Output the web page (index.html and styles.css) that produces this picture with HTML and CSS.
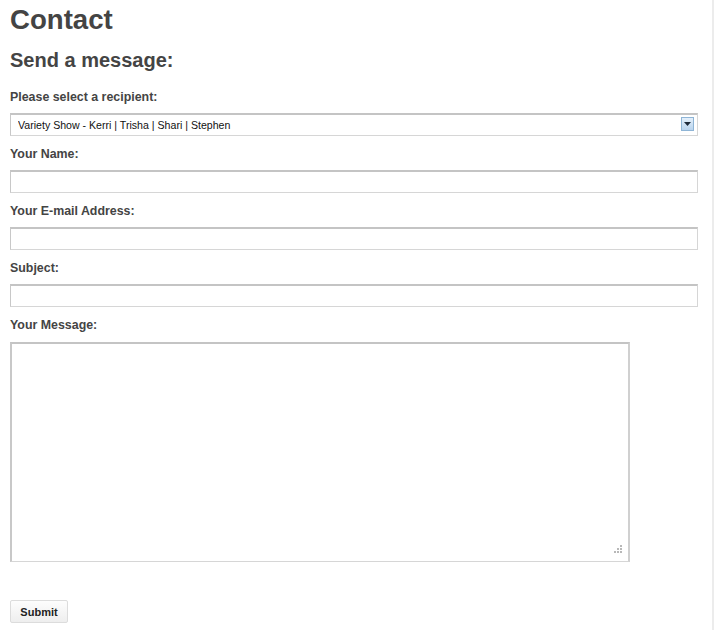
FILE: index.html
```html
<!DOCTYPE html>
<html>
<head>
<meta charset="utf-8">
<link rel="stylesheet" href="styles.css">
</head>
<body>
<div class="page">
  <h1 class="title">Contact</h1>
  <h2 class="subtitle">Send a message:</h2>
  <form class="form">
    <label class="label">Please select a recipient:</label>
    <div class="select-wrap">
      <select class="select">
        <option>Variety Show - Kerri | Trisha | Shari | Stephen</option>
      </select>
      <span class="select-btn"><svg width="7" height="4" viewBox="0 0 7 4"><path d="M0 0h7L3.5 4z" fill="#1d2a3a"/></svg></span>
    </div>
    <label class="label">Your Name:</label>
    <input class="input" type="text">
    <label class="label">Your E-mail Address:</label>
    <input class="input" type="text">
    <label class="label">Subject:</label>
    <input class="input" type="text">
    <label class="label">Your Message:</label>
    <div class="textarea-wrap">
      <textarea class="textarea"></textarea>
      <span class="grip"><svg width="9" height="9" viewBox="0 0 9 9"><g fill="#b8b8b8"><rect x="7" y="0" width="2" height="2"/><rect x="4" y="3" width="2" height="2"/><rect x="7" y="3" width="2" height="2"/><rect x="1" y="6" width="2" height="2"/><rect x="4" y="6" width="2" height="2"/><rect x="7" y="6" width="2" height="2"/></g></svg></span>
    </div>
    <div class="actions">
      <button class="submit" type="button">Submit</button>
    </div>
  </form>
</div>
</body>
</html>
```
FILE: styles.css
```css
html, body {
  margin: 0;
  padding: 0;
  background: #fff;
}
body {
  font-family: "Liberation Sans", Arial, sans-serif;
  color: #444;
}
.page {
  width: 702px;
  height: 630px;
  padding-left: 10px;
  border-right: 2px solid #ececec;
  box-sizing: content-box;
}
.title {
  margin: 0;
  padding-top: 4px;
  font-size: 27.6px;
  line-height: 32px;
  font-weight: bold;
  color: #444;
}
.subtitle {
  margin: 12px 0 0;
  font-size: 20px;
  line-height: 24px;
  font-weight: bold;
  color: #444;
}
.form {
  display: flex;
  flex-direction: column;
  align-items: flex-start;
  margin-top: 17px;
}
.label {
  display: block;
  font-size: 12.4px;
  line-height: 16px;
  font-weight: bold;
  color: #444;
  margin-bottom: 8px;
}
.select-wrap {
  position: relative;
  width: 688px;
  height: 23px;
  margin-bottom: 10px;
}
.select {
  -webkit-appearance: none;
  appearance: none;
  width: 688px;
  height: 23px;
  box-sizing: border-box;
  margin: 0;
  border: 1px solid #d6d6d6;
  border-top: 2px solid #c4c4c4;
  border-left-color: #c8c8c8;
  background: #fff;
  padding: 0 0 0 7px;
  font-family: "Liberation Sans", Arial, sans-serif;
  font-size: 10.6px;
  color: #111;
  border-radius: 0;
  outline: none;
}
.select-btn {
  position: absolute;
  right: 4px;
  top: 4px;
  width: 13px;
  height: 14px;
  box-sizing: border-box;
  border: 1px solid #8fb5d6;
  background: linear-gradient(#e4f0fb, #b9d4ee);
  display: flex;
  align-items: center;
  justify-content: center;
}
.input {
  width: 688px;
  height: 23px;
  box-sizing: border-box;
  margin: 0 0 10px;
  border: 1px solid #d6d6d6;
  border-top: 2px solid #c4c4c4;
  border-left-color: #c8c8c8;
  background: #fff;
  padding: 0 6px;
  font-family: "Liberation Sans", Arial, sans-serif;
  font-size: 12px;
  outline: none;
}
.textarea-wrap {
  position: relative;
  width: 620px;
  height: 220px;
  margin-top: 1px;
}
.textarea {
  display: block;
  width: 620px;
  height: 220px;
  box-sizing: border-box;
  margin: 0;
  border: 1px solid #d6d6d6;
  border-top: 2px solid #c4c4c4;
  border-left: 2px solid #c8c8c8;
  border-right: 2px solid #d0d0d0;
  background: #fff;
  resize: none;
  outline: none;
}
.grip {
  position: absolute;
  right: 8px;
  bottom: 8px;
  width: 9px;
  height: 9px;
  display: block;
  line-height: 0;
}
.actions {
  margin-top: 38px;
}
.submit {
  display: block;
  width: 58px;
  height: 23px;
  box-sizing: border-box;
  border: 1px solid #dcdcdc;
  border-radius: 2px;
  background: linear-gradient(#fdfdfd, #eeeeee);
  font-family: "Liberation Sans", Arial, sans-serif;
  font-size: 11px;
  font-weight: bold;
  color: #222;
  padding: 0;
}
```
